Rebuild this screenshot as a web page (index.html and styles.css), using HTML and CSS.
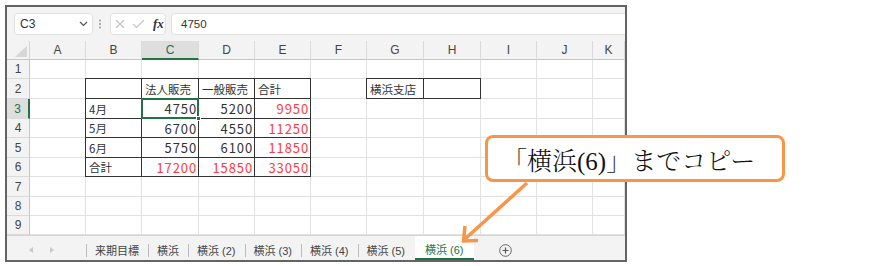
FILE: index.html
```html
<!DOCTYPE html>
<html lang="ja">
<head>
    <meta charset="UTF-8">
    <title>横浜(6)までコピー</title>
    <link rel="stylesheet" href="styles.css">
</head>
<body>

<div class="window">
    <!-- 数式バー -->
    <div class="formula-bar">
        <div class="name-box">
            <span>C3</span>
            <svg width="9" height="6" viewBox="0 0 9 6"><polyline points="1,1 4.5,4.5 8,1" fill="none" stroke="#555" stroke-width="1.2"/></svg>
        </div>
        <svg class="bar-dots" width="4" height="10" viewBox="0 0 4 10"><circle cx="2" cy="1.5" r="1" fill="#999"/><circle cx="2" cy="5" r="1" fill="#999"/><circle cx="2" cy="8.5" r="1" fill="#999"/></svg>
        <div class="fx-box">
            <svg width="10" height="10" viewBox="0 0 10 10"><path d="M1 1 L9 9 M9 1 L1 9" stroke="#c4c4c4" stroke-width="1.1" fill="none"/></svg>
            <svg width="13" height="10" viewBox="0 0 13 10"><polyline points="1,5 4.5,8.5 12,1" fill="none" stroke="#c4c4c4" stroke-width="1.1"/></svg>
            <span class="fx">fx</span>
        </div>
        <div class="formula-input">4750</div>
    </div>

    <!-- シート -->
    <div class="sheet">
        <div class="row hdr-row">
            <div class="corner"><svg width="12" height="11" viewBox="0 0 12 11"><polygon points="12,0 12,11 0,11" fill="#d6d6d6"/></svg></div>
            <div class="ch">A</div><div class="ch">B</div><div class="ch active">C</div><div class="ch">D</div><div class="ch">E</div><div class="ch">F</div><div class="ch">G</div><div class="ch">H</div><div class="ch">I</div><div class="ch">J</div><div class="ch">K</div>
        </div>
        <div class="row h19">
            <div class="rh">1</div>
            <div class="cell"></div><div class="cell"></div><div class="cell"></div><div class="cell"></div><div class="cell"></div><div class="cell"></div><div class="cell"></div><div class="cell"></div><div class="cell"></div><div class="cell"></div><div class="cell"></div>
        </div>
        <div class="row h20">
            <div class="rh">2</div>
            <div class="cell"></div>
            <div class="cell tb"></div>
            <div class="cell tb">法人販売</div>
            <div class="cell tb">一般販売</div>
            <div class="cell tb">合計</div>
            <div class="cell"></div>
            <div class="cell tb">横浜支店</div>
            <div class="cell tb"></div>
            <div class="cell"></div><div class="cell"></div><div class="cell"></div>
        </div>
        <div class="row h20">
            <div class="rh active">3</div>
            <div class="cell"></div>
            <div class="cell tb">4月</div>
            <div class="cell tb num selected">4750</div>
            <div class="cell tb num">5200</div>
            <div class="cell tb num red">9950</div>
            <div class="cell"></div><div class="cell"></div><div class="cell"></div><div class="cell"></div><div class="cell"></div><div class="cell"></div>
        </div>
        <div class="row h19">
            <div class="rh">4</div>
            <div class="cell"></div>
            <div class="cell tb">5月</div>
            <div class="cell tb num">6700</div>
            <div class="cell tb num">4550</div>
            <div class="cell tb num red">11250</div>
            <div class="cell"></div><div class="cell"></div><div class="cell"></div><div class="cell"></div><div class="cell"></div><div class="cell"></div>
        </div>
        <div class="row h20">
            <div class="rh">5</div>
            <div class="cell"></div>
            <div class="cell tb">6月</div>
            <div class="cell tb num">5750</div>
            <div class="cell tb num">6100</div>
            <div class="cell tb num red">11850</div>
            <div class="cell"></div><div class="cell"></div><div class="cell"></div><div class="cell"></div><div class="cell"></div><div class="cell"></div>
        </div>
        <div class="row h19">
            <div class="rh">6</div>
            <div class="cell"></div>
            <div class="cell tb">合計</div>
            <div class="cell tb num red">17200</div>
            <div class="cell tb num red">15850</div>
            <div class="cell tb num red">33050</div>
            <div class="cell"></div><div class="cell"></div><div class="cell"></div><div class="cell"></div><div class="cell"></div><div class="cell"></div>
        </div>
        <div class="row h20">
            <div class="rh">7</div>
            <div class="cell"></div><div class="cell"></div><div class="cell"></div><div class="cell"></div><div class="cell"></div><div class="cell"></div><div class="cell"></div><div class="cell"></div><div class="cell"></div><div class="cell"></div><div class="cell"></div>
        </div>
        <div class="row h19">
            <div class="rh">8</div>
            <div class="cell"></div><div class="cell"></div><div class="cell"></div><div class="cell"></div><div class="cell"></div><div class="cell"></div><div class="cell"></div><div class="cell"></div><div class="cell"></div><div class="cell"></div><div class="cell"></div>
        </div>
        <div class="row h19">
            <div class="rh">9</div>
            <div class="cell"></div><div class="cell"></div><div class="cell"></div><div class="cell"></div><div class="cell"></div><div class="cell"></div><div class="cell"></div><div class="cell"></div><div class="cell"></div><div class="cell"></div><div class="cell"></div>
        </div>
    </div>

    <!-- シート見出し -->
    <div class="tabs">
        <div class="tab-nav">
            <svg width="4" height="6" viewBox="0 0 4 6"><polygon points="4,0 4,6 0,3" fill="#c8c8c8"/></svg>
            <svg width="4" height="6" viewBox="0 0 4 6"><polygon points="0,0 0,6 4,3" fill="#c8c8c8"/></svg>
        </div>
        <div class="tab">来期目標</div>
        <div class="tab">横浜</div>
        <div class="tab">横浜 (2)</div>
        <div class="tab">横浜 (3)</div>
        <div class="tab">横浜 (4)</div>
        <div class="tab">横浜 (5)</div>
        <div class="tab current">横浜 (6)</div>
        <svg class="add-sheet" width="13" height="13" viewBox="0 0 13 13"><circle cx="6.5" cy="6.5" r="5.8" fill="none" stroke="#666" stroke-width="1"/><path d="M6.5 3.5 V9.5 M3.5 6.5 H9.5" stroke="#555" stroke-width="1.2"/></svg>
    </div>
</div>

<div class="callout">「横浜(6)」までコピー</div>
<svg class="arrow" width="889" height="266" viewBox="0 0 889 266">
    <line x1="527" y1="183" x2="465" y2="239" stroke="#f7964a" stroke-width="3.5"/>
    <polyline points="478,240.5 463.5,241 465,226" fill="none" stroke="#f7964a" stroke-width="3.5" stroke-linejoin="miter"/>
</svg>

</body>
</html>
```

FILE: styles.css
```css
body {
    margin: 0;
    background-color: #fff;
    font-family: "Noto Sans CJK JP", sans-serif;
    color: #222;
}

.window {
    width: 622px;
    margin: 5px 0 0 5px;
    border: 2px solid #646464;
    box-sizing: border-box;
    background-color: #fff;
}

/* 数式バー */
.formula-bar {
    display: flex;
    align-items: center;
    height: 34px;
    padding-left: 7px;
    background-color: #f3f3f3;
}

.name-box {
    display: flex;
    align-items: center;
    justify-content: space-between;
    box-sizing: border-box;
    width: 79px;
    height: 22px;
    padding: 0 4px 0 5px;
    background-color: #fff;
    border: 1px solid #e2e2e2;
    border-radius: 4px;
    font: 12px "Liberation Sans", sans-serif;
    color: #333;
}

.bar-dots {
    margin: 0 8px 0 5px;
}

.fx-box {
    display: flex;
    align-items: center;
    box-sizing: border-box;
    width: 56px;
    height: 22px;
    padding-left: 4px;
    gap: 7px;
    background-color: #fff;
    border: 1px solid #e2e2e2;
    border-radius: 4px;
}

.fx {
    font: italic bold 13px "Liberation Serif", serif;
    color: #333;
    margin-left: 1px;
}

.formula-input {
    flex: 1;
    box-sizing: border-box;
    height: 22px;
    margin-left: 5px;
    padding-left: 9px;
    background-color: #fff;
    border: 1px solid #e2e2e2;
    border-right: none;
    border-radius: 4px 0 0 4px;
    font: 11.5px/20px "Liberation Sans", sans-serif;
    color: #333;
}

/* シート */
.row {
    display: grid;
    grid-template-columns: 23px 56px 56px 57px 56px 56px 56px 57px 57px 56px 56px 32px;
}

.hdr-row { height: 19px; }
.h19 { height: 19px; }
.h20 { height: 20px; }

.row > div {
    box-sizing: border-box;
}

.corner {
    display: flex;
    align-items: flex-end;
    justify-content: flex-end;
    padding: 0 2px 2px 0;
    background-color: #f3f3f3;
    border-right: 1px solid #d6d6d6;
    border-bottom: 1px solid #c6c6c6;
}

.ch {
    display: flex;
    align-items: center;
    justify-content: center;
    background-color: #f3f3f3;
    border-right: 1px solid #dadada;
    border-bottom: 1px solid #c6c6c6;
    font: 12px "Liberation Sans", sans-serif;
    color: #444;
}

.ch.active {
    background-color: #dedede;
    border-bottom: 2px solid #217346;
    color: #217346;
}

.rh {
    display: flex;
    align-items: center;
    justify-content: center;
    background-color: #f3f3f3;
    border-right: 1px solid #c6c6c6;
    border-bottom: 1px solid #dadada;
    font: 12px "Liberation Sans", sans-serif;
    color: #444;
}

.rh.active {
    background-color: #dedede;
    border-right: 2px solid #217346;
    color: #217346;
}

.cell {
    display: flex;
    align-items: center;
    padding: 0 2px 0 3px;
    border-right: 1px solid #e1e1e1;
    border-bottom: 1px solid #e1e1e1;
    font-size: 11.5px;
    color: #333;
    white-space: nowrap;
    overflow: hidden;
}

/* 罫線付きのセル */
.tb {
    border-right-color: #333;
    border-bottom-color: #333;
    box-shadow: 0 -1px 0 #333, -1px 0 0 #333, -1px -1px 0 #333;
}

.num {
    justify-content: flex-end;
    font-size: 13px;
    letter-spacing: 0.9px;
    padding-right: 1px;
}

.red {
    color: #ff3b3b;
}

.selected {
    position: relative;
    overflow: visible;
}

.selected::after {
    content: "";
    position: absolute;
    left: -1px;
    top: -1px;
    right: -1px;
    bottom: -1px;
    border: 2px solid #217346;
}

.selected::before {
    content: "";
    position: absolute;
    right: -3px;
    bottom: -3px;
    width: 5px;
    height: 5px;
    background-color: #217346;
    border: 1px solid #fff;
    box-sizing: border-box;
    z-index: 1;
}

/* シート見出し */
.tabs {
    display: flex;
    height: 25px;
    box-sizing: border-box;
    border-top: 1px solid #d4d4d4;
    background-color: #f3f3f3;
    font: 11px "Liberation Sans", "Noto Sans CJK JP", sans-serif;
    color: #444;
}

.tab-nav {
    display: flex;
    align-items: center;
    gap: 17px;
    width: 79px;
    padding: 4px 0 0 22px;
    box-sizing: border-box;
}

.tab {
    display: flex;
    align-items: center;
    padding: 4px 9px 0;
    position: relative;
}

.tab::before {
    content: "";
    position: absolute;
    left: 0;
    top: 8px;
    height: 13px;
    border-left: 1px solid #bdbdbd;
}

.tab.current {
    margin-left: 1px;
    padding: 4px 10px 0;
    background-color: #fff;
    color: #217346;
    border-bottom: 2px solid #217346;
}

.tab.current::before {
    display: none;
}

.add-sheet {
    align-self: center;
    margin: 4px 0 0 25px;
}

/* 吹き出し */
.callout {
    position: absolute;
    left: 485px;
    top: 135px;
    width: 300px;
    height: 47px;
    box-sizing: border-box;
    padding-left: 14px;
    display: flex;
    align-items: center;
    background-color: #fff;
    border: 3px solid #f7964a;
    border-radius: 8px;
    font: 300 25px "Liberation Serif", "Noto Serif CJK JP", "Noto Sans CJK JP", serif;
    color: #111;
}

.arrow {
    position: absolute;
    left: 0;
    top: 0;
    pointer-events: none;
}
```
